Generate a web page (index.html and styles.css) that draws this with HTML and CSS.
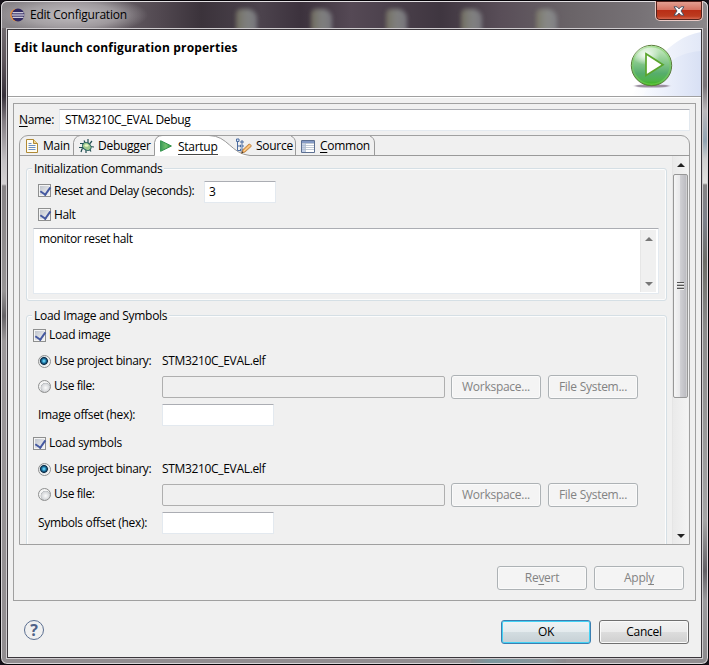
FILE: index.html
```html
<!DOCTYPE html>
<html lang="en">
<head>
<meta charset="utf-8">
<title>Edit Configuration</title>
<link rel="stylesheet" href="styles.css">
</head>
<body>
<div class="window">
  <div class="titlebar">
    <i class="blob b1"></i><i class="blob b2"></i><i class="blob b3"></i><i class="blob b4"></i><i class="blob b5"></i>
    <svg class="app-icon" width="15" height="14" viewBox="0 0 15 14"><circle cx="6.5" cy="7" r="6.3" fill="#f09038"/><circle cx="8" cy="7" r="6.4" fill="#302962"/><path d="M2.5 4.8h11M1.8 7h12.5M2.5 9.2h11" stroke="#fff" stroke-width="1.1"/></svg>
    <span class="title">Edit Configuration</span>
    <button class="close" aria-label="Close"><svg width="12" height="10" viewBox="0 0 12 10"><path d="M1 .8h3.1L6 2.9 7.9.8H11L8 5l3 4.2H7.9L6 7.1 4.1 9.2H1L4 5z" fill="#fff" stroke="#4a5264" stroke-width="1"/></svg></button>
  </div>
  <div class="client">
    <div class="header">
      <h1>Edit launch configuration properties</h1>
      <svg class="banner" width="80" height="66" viewBox="0 0 80 66">
        <defs>
          <linearGradient id="sw" x1="0" x2="1"><stop offset="0" stop-color="#fff"/><stop offset="1" stop-color="#e2e8f7"/></linearGradient>
          <linearGradient id="sw2" x1="0" x2="1"><stop offset="0" stop-color="#f8faff"/><stop offset="1" stop-color="#d8e0f4"/></linearGradient>
          <linearGradient id="ball" x1="0" y1="0" x2="0" y2="1"><stop offset="0" stop-color="#d5f0cf"/><stop offset=".35" stop-color="#93cf94"/><stop offset=".7" stop-color="#56ad6c"/><stop offset=".88" stop-color="#4fb548"/><stop offset="1" stop-color="#36b50c"/></linearGradient>
          <radialGradient id="shine"><stop offset="0" stop-color="#fff" stop-opacity=".95"/><stop offset="1" stop-color="#fff" stop-opacity="0"/></radialGradient>
          <filter id="blur"><feGaussianBlur stdDeviation="1.6 .6"/></filter>
        </defs>
        <path d="M10 66C28 42 45 8 80 2v64z" fill="url(#sw)"/>
        <path d="M22 66C34 42 50 23 80 21v45z" fill="url(#sw2)"/>
        <ellipse cx="31" cy="56" rx="17" ry="1.6" fill="#9b8fa0" filter="url(#blur)"/>
        <circle cx="30.5" cy="35.500" r="20.200" fill="url(#ball)" stroke="#5c7c3c" stroke-width="1"/>
        <circle cx="30.5" cy="35.500" r="18.800" fill="none" stroke="#7ccf5e" stroke-opacity=".55" stroke-width="1.500"/>
        <ellipse cx="25" cy="25" rx="14" ry="10" fill="url(#shine)"/>
        <path d="M25 23.800 42 34.800 25 45.500z" fill="#fff" stroke="#5aa52c" stroke-width="1.700"/>
      </svg>
    </div>
    <div class="config">
      <div class="name-row"><label><u>N</u>ame:</label><div class="field name-field">STM3210C_EVAL Debug</div></div>
      <div class="folder">
        <div class="tabs">
          <svg class="tab-shape" width="671" height="21" viewBox="0 0 671 21" fill="none" stroke="#9a9a9a">
            <path d="M136 21V8Q137 1 144 1H190C209 1 212 19 231 21z" fill="#fff" stroke="none"/>
            <path d="M0 20.500H135.500V7.500Q137 .5 143 .5M143 .5H190C209 .5 212 19 231 20.500H671"/>
            <path d="M54.500 20V7.500Q55.500 1.500 61 .5M272 1Q276.500 3 276.500 8V20M351 1Q355.500 3 355.500 8V20"/>
          </svg>
          <div class="tab t-main"><svg width="12" height="14" viewBox="0 0 12 14"><path d="M.5.5h7l4 4v9H.5z" fill="#fffdf2" stroke="#b08a35"/><path d="M7.500.5v4h4" fill="#f1d590" stroke="#b08a35"/><path d="M2.500 4.500h3M2.500 6.500h7M2.500 8.500h7M2.500 10.500h7" stroke="#6c8fc4"/></svg><span>Main</span></div>
          <div class="tab t-debug"><svg width="15" height="15" viewBox="0 0 15 15"><path d="M1 4.500h3l1.500 2M0 8.500h5M2 13l1-3 3-1M7 14v-4M12 12.500l-2-3M15 8l-4-.5M13 2l-2.500 3M5 1.500l1.500 3M9 0v4" stroke="#204c50" stroke-width="1.2" fill="none"/><ellipse cx="7.800" cy="7.500" rx="4.600" ry="3.600" transform="rotate(35 7.800 7.500)" fill="#9fc98e" stroke="#246061"/><ellipse cx="7.500" cy="6.500" rx="2" ry="1.300" fill="#e9f6c5"/></svg><span>Debugger</span></div>
          <div class="tab t-start"><svg width="12" height="12" viewBox="0 0 12 12"><defs><linearGradient id="play" x1="0" y1="0" x2="1" y2="0"><stop stop-color="#3b9a58"/><stop offset=".5" stop-color="#6fc06c"/><stop offset="1" stop-color="#258f3e"/></linearGradient></defs><path d="M.6.7 11.400 6 .6 11.300z" fill="url(#play)" stroke="#2f9148"/></svg><span class="underlined">Startup</span></div>
          <div class="tab t-source"><svg width="16" height="16" viewBox="0 0 16 16"><path d="M1.500 4v8.500H5M1.500 8H5" stroke="#4c6da0" fill="none"/><path d="M.5 1h2.500v2.500H.5zM5 3h2v2H5zM4.500 7H7v2H4.500zM4.500 11H7v2H4.500z" fill="#dce9f8" stroke="#4c6da0"/><path d="M5.500 15.200 7 11.500 13 6q2.200.2 2.300 2.300L9 14z" fill="#f0ae60" stroke="#b57a3b" stroke-width=".8"/><path d="M8 13 14.500 7" stroke="#ffdaa0"/><path d="m5.300 15.400 1-2.200 1 1.200z" fill="#333"/></svg><span>Source</span></div>
          <div class="tab t-common"><svg width="14" height="13" viewBox="0 0 14 13"><path d="M.5.500h13v12H.5z" fill="#fff" stroke="#5c6f91"/><path d="M1 1h12v2H1z" fill="#8399c4"/><path d="M1 4h3v8H1z" fill="#c3d0e8"/><path d="M4.500 3v9M1 3.500h12M1 5.500h12M1 7.500h12M1 9.500h12" stroke="#b0bccb" stroke-width=".8"/></svg><span><u>C</u>ommon</span></div>
        </div>
        <div class="scroller">
          <div class="page">
            <section class="group init">
              <h2><span>Initialization Commands</span></h2>
              <div class="row reset"><i class="check"></i><label>Reset and Delay (seconds):</label><div class="field delay">3</div></div>
              <div class="row halt"><i class="check"></i><label>Halt</label></div>
              <div class="field textarea"><span>monitor reset halt</span><div class="mini-scroll"><i class="up"></i><i class="down"></i></div></div>
            </section>
            <section class="group load">
              <h2><span>Load Image and Symbols</span></h2>
              <div class="block">
                <div class="row section-check"><i class="check"></i><label>Load image</label></div>
                <div class="row project"><i class="radio on"></i><label class="lab">Use project binary:</label><span class="elf">STM3210C_EVAL.elf</span></div>
                <div class="row file"><i class="radio"></i><label class="lab">Use file:</label><div class="field off"></div><button class="btn disabled">Workspace...</button><button class="btn disabled">File System...</button></div>
                <div class="row offset"><label class="off-lab">Image offset (hex):</label><div class="field hex"></div></div>
              </div>
              <div class="block">
                <div class="row section-check"><i class="check"></i><label>Load symbols</label></div>
                <div class="row project"><i class="radio on"></i><label class="lab">Use project binary:</label><span class="elf">STM3210C_EVAL.elf</span></div>
                <div class="row file"><i class="radio"></i><label class="lab">Use file:</label><div class="field off"></div><button class="btn disabled">Workspace...</button><button class="btn disabled">File System...</button></div>
                <div class="row offset"><label class="off-lab">Symbols offset (hex):</label><div class="field hex"></div></div>
              </div>
            </section>
          </div>
          <div class="scrollbar"><i class="up"></i><div class="thumb"><i></i></div><i class="down"></i></div>
        </div>
      </div>
      <div class="actions"><button class="btn disabled">Re<u>v</u>ert</button><button class="btn disabled">Appl<u>y</u></button></div>
    </div>
    <div class="footer">
      <div class="help">?</div>
      <div class="buttons"><button class="btn primary">OK</button><button class="btn">Cancel</button></div>
    </div>
  </div>
</div>
</body>
</html>
```
FILE: styles.css
```css
* { box-sizing: border-box; }
body {
  margin: 0;
  background: #16121a;
  font: 12px/16px "Open Sans", "Noto Sans", sans-serif;
  letter-spacing: -0.27px;
  color: #000;
  overflow: hidden;
}
i { display: block; flex: none; }
svg { display: block; flex: none; }
label, span { white-space: nowrap; }
label { letter-spacing: -0.33px; flex: none; }
u { text-underline-offset: 2px; text-decoration-thickness: 1px; text-decoration-skip-ink: none; }

.window {
  width: 709px;
  height: 665px;
  border: 1px solid #050307;
  border-radius: 7px;
  padding: 0 5px 5px;
  background:
    linear-gradient(90deg, #8b8a8d, #7b979e 20px, #8b959a 75px, #8d898c) 470px 100% / 95px 6px no-repeat,
    linear-gradient(#827e82 0, #5d555b 60px, #37313a 95px, #827c82 120px, #c4c1c4 160px, #d4d1d3 183px, #878386 185px, #979495 290px, #656266 315px, #9d999b 340px, #918d90 100%) 0 0 / 8px 100% no-repeat,
    linear-gradient(#8c898c 0, #777377 85px, #bbb8bb 110px, #91a3b1 140px, #cfcfcf 158px, #e2e1df 182px, #858384 184px, #7c808a 220px, #6d6d68 260px, #8c8c8c 330px, #a5a5a5 520px, #626064 570px, #9b9b9d 600px, #8c8a8d 100%) 100% 0 / 8px 100% no-repeat,
    #918d90;
  box-shadow: inset 0 0 0 1px #d9d6d9;
}

.titlebar {
  position: relative;
  height: 27px;
  display: flex;
  align-items: flex-start;
  margin: 0 -5px;
  padding: 7px 0 0 9px;
  border-radius: 6px 6px 0 0;
  overflow: hidden;
  background:
    radial-gradient(ellipse 75px 20px at 72px 14px, rgba(205,202,205,.85) 0, rgba(185,181,184,.65) 60%, rgba(150,145,150,0) 100%),
    linear-gradient(90deg, #8a868a 0, #6d666c 100px, #514850 160px, #3b333b 200px, #4c434d 260px, #3c323d 300px, #554955 350px, #3f3640 440px, #594e58 500px, #6a6468 570px, #777276 640px, #8b888b 100%);
  box-shadow: inset 0 1px #e2dfe2, inset 1px 0 #d9d6d9, inset -1px 0 #d9d6d9;
}
.blob {
  position: absolute;
  top: 8px;
  width: 21px;
  height: 23px;
  border-radius: 5px 9px 0 0;
  background: linear-gradient(90deg, #85846c, #979c96 50%, #8c8e93);
  filter: blur(2px);
  opacity: .7;
}
.b1 { left: 235px; }
.b2 { left: 310px; }
.b3 { left: 385px; }
.b4 { left: 460px; }
.b5 { left: 535px; }
.app-icon { position: relative; }
.title { position: relative; margin-left: 5px; line-height: 14px; letter-spacing: -0.23px; }
.close {
  position: absolute;
  right: 5px;
  top: 0;
  width: 48px;
  height: 20px;
  padding: 0;
  display: grid;
  place-items: center;
  border: 1px solid #e9c9c4;
  border-top: 0;
  border-radius: 0 0 5px 5px;
  background: linear-gradient(#e4a497 0, #d57463 45%, #b92e16 50%, #bd3c20 80%, #df7760 100%);
  box-shadow: inset 0 0 0 1px #54221c;
}

.client {
  height: 631px;
  border: 1px solid #cfcccf;
  outline: 1px solid #3b373c;
  outline-offset: -2px;
  padding: 1px;
  background: #f0f0f0;
}
.header {
  height: 68px;
  display: flex;
  justify-content: space-between;
  background: #fff;
  border-bottom: 1px solid #fff;
  box-shadow: inset 0 -1px #a0a0a0;
}
.header h1 {
  margin: 10px 0 0 6px;
  font-size: 12px;
  line-height: 16px;
  letter-spacing: 0.18px;
  font-weight: 700;
}

.config {
  width: 683px;
  height: 498px;
  margin: 5px 0 0 5px;
  padding: 5px 5px 0;
  border: 1px solid #a0a0a0;
}
.name-row { display: flex; height: 22px; }
.name-row label { width: 40px; padding-top: 3px; }
.field {
  background: #fff;
  border: 1px solid #e3e9ef;
  border-top-color: #abadb3;
  border-radius: 1px;
}
.name-field { flex: 1; padding: 2px 5px; letter-spacing: -0.33px; }

.folder {
  position: relative;
  height: 410px;
  margin-top: 4px;
  border: 1px solid #a0a0a0;
  border-radius: 9px 9px 0 0;
}
.tabs { display: flex; position: relative; height: 20px; }
.tab-shape { position: absolute; left: -1px; top: -1px; }
.tab { position: relative; height: 20px; display: flex; align-items: center; }
.tab span { margin-left: 5px; }
.t-main { width: 59px; padding-left: 6px; }
.t-debug { width: 81px; }
.t-debug span { margin-left: 4px; }
.t-start { width: 76px; }
.t-start .underlined { line-height: 15px; margin-left: 6px; margin-top: 1px; border-bottom: 1px solid #444; }
.t-source { width: 65px; }
.t-source span { margin-left: 4px; }

.scroller { display: flex; height: 388px; }
.page { width: 653px; padding: 4px 6px 0; overflow: hidden; }
.group {
  position: relative;
  width: 641px;
  border: 1px solid #d5dfe5;
  border-radius: 3px;
  box-shadow: inset 0 0 0 1px #fcfcfc;
}
.init { height: 133px; margin-top: 8px; }
.load { height: 300px; margin-top: 14px; }
.group h2 { height: 16px; margin: -8px 0 0 5px; font-size: 12px; font-weight: 400; line-height: 16px; letter-spacing: -0.29px; }
.group h2 span { display: inline-block; background: #f0f0f0; padding: 0 2px; }
.row { display: flex; align-items: center; }
.check {
  width: 13px;
  height: 13px;
  border: 1px solid #8e8f8f;
  background: linear-gradient(135deg, #bfc4cd, #f3f3f3) content-box, #f4f4f4;
  padding: 1px;
  position: relative;
}
.check::after {
  content: "";
  position: absolute;
  left: 3px;
  top: 0;
  width: 5px;
  height: 8px;
  border: solid #4458a0;
  border-width: 0 2px 2px 0;
  transform: rotate(35deg);
}
.reset { height: 22px; margin-top: 4px; padding-left: 11px; }
.reset .check { margin-top: -3px; }
.reset label { width: 153px; padding-left: 3px; margin-top: -2px; }
.delay { width: 72px; height: 22px; padding: 2px 4px; }
.halt { height: 16px; margin-top: 4px; padding-left: 11px; }
.halt .check { margin-top: -1px; }
.halt label { padding-left: 3px; }
.textarea {
  width: 626px;
  height: 66px;
  margin: 5px 0 0 6px;
  padding: 1px;
  display: flex;
  justify-content: space-between;
}
.textarea span { padding: 1px 4px; letter-spacing: -0.42px; }
.mini-scroll { width: 16px; margin-right: 1px; background: #f0f0f0; border-left: 1px solid #e6e6e6; display: flex; flex-direction: column; justify-content: space-between; align-items: center; padding: 7px 0 6px; }
.up, .down { width: 0; height: 0; border: solid transparent; }
.up { border-width: 0 4px 4px; border-bottom-color: #222; }
.down { border-width: 4px 4px 0; border-top-color: #222; }
.mini-scroll .up { border-bottom-color: #777; }
.mini-scroll .down { border-top-color: #777; }

.block { height: 108px; padding-top: 3px; }
.section-check { height: 16px; padding-left: 6px; }
.section-check label { padding-left: 3px; }
.project { height: 20px; margin-top: 8px; padding-left: 11px; }
.elf { letter-spacing: -0.33px; }
.radio {
  width: 13px;
  height: 13px;
  border: 1px solid #8e8f8f;
  border-radius: 50%;
  background: radial-gradient(circle at 60% 62%, #fbfbfb 0, #d5d7da 42%, #b7babd 50%, #f4f4f4 56%);
}
.radio.on { background: radial-gradient(circle at 45% 45%, #9beaff 0, #36a5d4 16%, #0d3e62 36%, #14334b 42%, #d5dade 50%, #f4f4f4 60%); }
.lab { width: 111px; padding-left: 3px; letter-spacing: -0.42px; }
.file { height: 24px; margin-top: 4px; padding-left: 11px; }
.file .radio, .file .lab { margin-top: -2px; }
.off { width: 283px; height: 22px; background: #f0f0f0; border-color: #afafaf; border-radius: 2px; }
.btn {
  width: 90px;
  height: 24px;
  padding: 0;
  border: 1px solid #707070;
  border-radius: 3px;
  background: linear-gradient(#f2f2f2 0, #ebebeb 48%, #dddddd 50%, #cfcfcf 100%);
  box-shadow: inset 0 0 0 1px #fafafa;
  color: #000;
  font: inherit;
  letter-spacing: inherit;
}
.btn.disabled { color: #838383; border-color: #adb2b5; background: #f4f4f4; }
.btn.primary { border-color: #3c7fb1; box-shadow: inset 0 0 0 1px #43d2f5; background: linear-gradient(#eef3f5 0, #e4ebee 48%, #d3dde1 50%, #c6d0d5 100%); }
.file .btn { margin-left: 6px; }
.file .btn + .btn { margin-left: 7px; }
.offset { height: 22px; margin-top: 5px; padding-left: 11px; }
.off-lab { width: 124px; }
.hex { width: 112px; height: 22px; }

.scrollbar {
  width: 16px;
  margin-left: -1px;
  display: flex;
  flex-direction: column;
  align-items: center;
  border-left: 1px solid #e5e5e5;
  background: linear-gradient(90deg, #eaeaea, #f3f3f3);
}
.scrollbar .up { margin-top: 7px; }
.thumb {
  width: 15px;
  height: 224px;
  margin-top: 7px;
  border: 1px solid #979797;
  border-radius: 2px;
  background: linear-gradient(90deg, #f5f5f5 0, #e8e8ea 45%, #cfcfd3 50%, #bdbdc2 90%, #ddd 100%);
  display: grid;
  place-items: center;
}
.thumb i { width: 7px; height: 8px; background: repeating-linear-gradient(#555 0 1px, #eee 1px 2px, #bbb 2px 3px); }
.scrollbar .down { margin-top: auto; margin-bottom: 6px; }

.actions { display: flex; justify-content: flex-end; gap: 7px; margin: 21px 6px 0 0; }
.footer { display: flex; justify-content: space-between; padding: 19px 12px 0 15px; }
.help {
  width: 20px;
  height: 20px;
  margin-left: 1px;
  border: 1px solid #5b6f91;
  border-radius: 50%;
  color: #4f6288;
  font-size: 16px;
  font-weight: 700;
  line-height: 18px;
  text-align: center;
}
.buttons { display: flex; gap: 8px; }
```
